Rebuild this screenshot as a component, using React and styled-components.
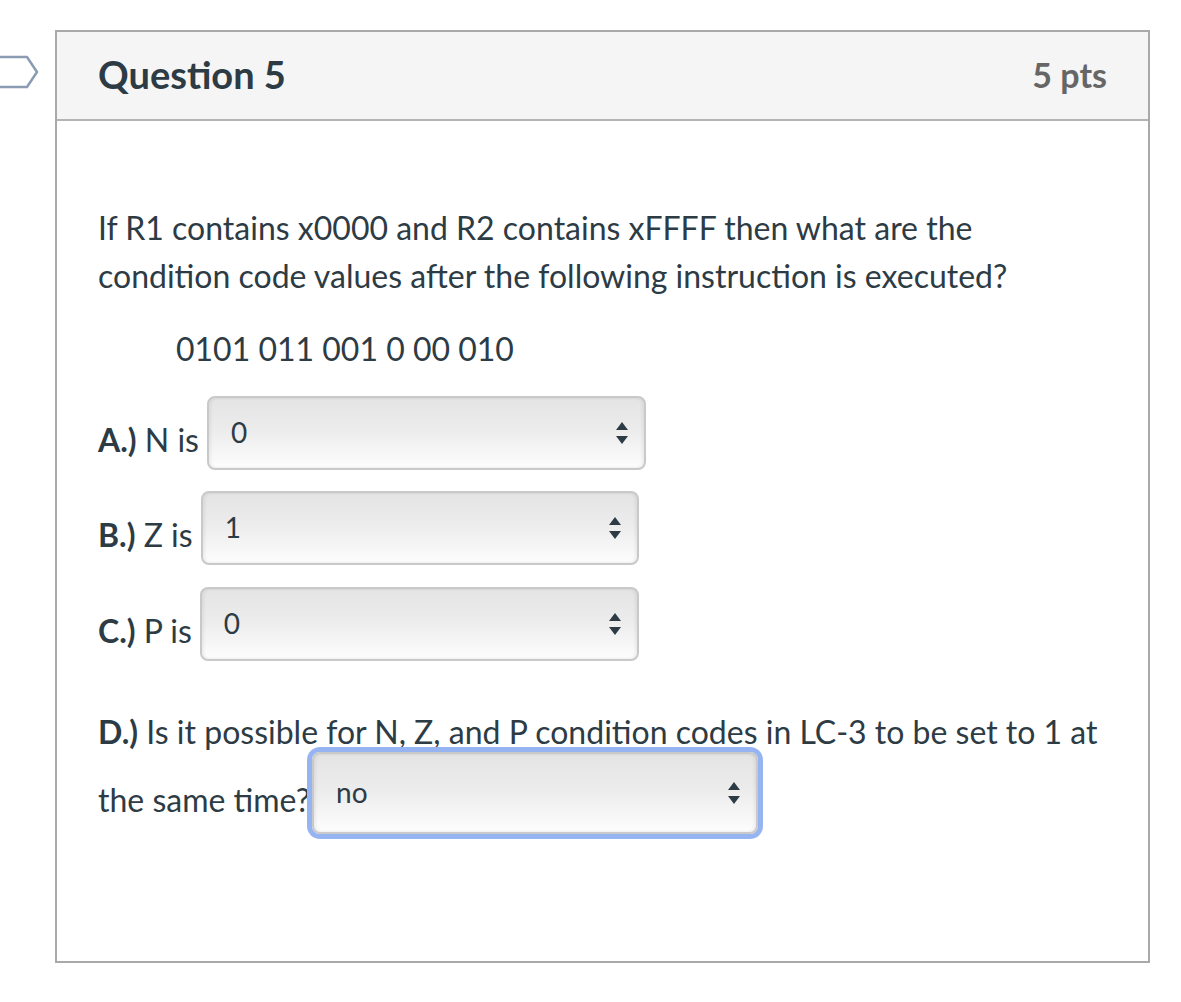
import styled, { createGlobalStyle } from "styled-components";

const GlobalStyle = createGlobalStyle`
  body {
    margin: 0;
    background: #fff;
    font-family: Lato, "Open Sans", sans-serif;
    color: #2d3b45;
  }
`;

const Page = styled.div`
  display: flex;
  align-items: flex-start;
  padding-top: 30px;
`;

const Flag = styled.svg`
  width: 40px;
  height: 34px;
  margin-top: 25px;
  margin-right: 15px;
  flex-shrink: 0;
`;

const Card = styled.div`
  width: 1095px;
  min-height: 933px;
  box-sizing: border-box;
  border: 2px solid #a9a9a9;
  display: flex;
  flex-direction: column;
`;

const Header = styled.div`
  display: flex;
  justify-content: space-between;
  align-items: center;
  height: 87px;
  padding: 0 41px;
  background: #f5f5f5;
  border-bottom: 2px solid #b4b4b4;
`;

const Title = styled.div`
  font-size: 38px;
  font-weight: 700;
  color: #2d3b45;
  margin-top: -3px;
`;

const Points = styled.div`
  font-size: 34px;
  font-weight: 700;
  color: #666;
  margin-top: -3px;
`;

const Body = styled.div`
  padding: 83px 41px 0 41px;
  font-size: 32px;
  line-height: 48px;
`;

const Para = styled.p`
  margin: ${(p) => p.$mt || 0}px 0 0 ${(p) => p.$indent || 0}px;
`;

const Row = styled.div`
  display: flex;
  align-items: flex-end;
  gap: 8px;
  margin-top: ${(p) => p.$mt}px;
`;

const Label = styled.span`
  line-height: 48px;
  margin-bottom: 6px;
  white-space: nowrap;
`;

const SelectBox = styled.span`
  display: ${(p) => (p.$inline ? "inline-flex" : "flex")};
  align-items: center;
  justify-content: space-between;
  box-sizing: border-box;
  width: ${(p) => p.$w}px;
  height: ${(p) => p.$h}px;
  padding: 0 15px 0 22px;
  border: 2px solid #c9c9c9;
  border-radius: 8px;
  background: linear-gradient(#e4e4e4, #ececec 45%, #fdfdfd);
  box-shadow: inset 2px 0 3px rgba(0, 0, 0, 0.06), inset -2px 0 3px rgba(0, 0, 0, 0.06)
    ${(p) => (p.$focused ? ", 0 0 0 5px #97b4f2" : "")};
  font-size: 28px;
  line-height: 1;
  color: #2d3b45;
  ${(p) =>
    p.$inline &&
    `
    vertical-align: middle;
    margin: -4px 0 18px 2px;
  `}
`;

const SelectText = styled.span`
  margin-top: -3px;
`;

const Arrows = () => (
  <svg width="14" height="24" viewBox="0 0 14 24">
    <path d="M7 1 L13 9 L1 9 Z" fill="#2d3b45" />
    <path d="M7 23 L13 15 L1 15 Z" fill="#2d3b45" />
  </svg>
);

const Select = ({ value, w, h = 74, inline, focused }) => (
  <SelectBox $w={w} $h={h} $inline={inline} $focused={focused}>
    <SelectText>{value}</SelectText>
    <Arrows />
  </SelectBox>
);

export default function App() {
  return (
    <>
      <GlobalStyle />
      <Page>
        <Flag viewBox="0 0 40 34">
          <path
            d="M-10 2 H27 L37 17 L27 32 H-10"
            fill="none"
            stroke="#8a9db3"
            strokeWidth="2.5"
            strokeLinejoin="round"
          />
        </Flag>
        <Card>
          <Header>
            <Title>Question 5</Title>
            <Points>5 pts</Points>
          </Header>
          <Body>
            <Para>
              If R1 contains x0000 and R2 contains xFFFF then what are the condition code values after the
              following instruction is executed?
            </Para>
            <Para $mt={25} $indent={78}>
              0101 011 001 0 00 010
            </Para>
            <Row $mt={23}>
              <Label>
                <b>A.)</b> N is
              </Label>
              <Select value="0" w={439} />
            </Row>
            <Row $mt={21}>
              <Label>
                <b>B.)</b> Z is
              </Label>
              <Select value="1" w={438} />
            </Row>
            <Row $mt={22}>
              <Label>
                <b>C.)</b> P is
              </Label>
              <Select value="0" w={439} />
            </Row>
            <Para $mt={47}>
              <b>D.)</b> Is it possible for N, Z, and P condition codes in LC-3 to be set to 1 at the same time?
              <Select value="no" w={446} h={82} inline focused />
            </Para>
          </Body>
        </Card>
      </Page>
    </>
  );
}
